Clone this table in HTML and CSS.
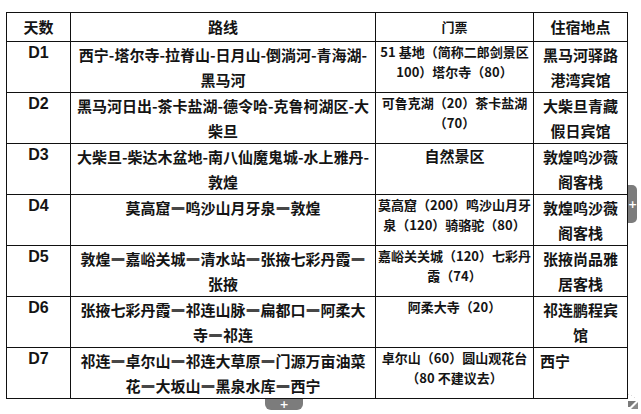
FILE: index.html
```html
<!DOCTYPE html>
<html lang="zh-CN">
<head>
<meta charset="utf-8">
<title>行程</title>
<link rel="stylesheet" href="styles.css">
</head>
<body>
<div class="stage">
  <table class="trip">
    <colgroup>
      <col class="c-day"><col class="c-route"><col class="c-ticket"><col class="c-stay">
    </colgroup>
    <thead>
      <tr class="head">
        <th class="h-big">天数</th>
        <th class="h-big">路线</th>
        <th class="h-small">门票</th>
        <th class="h-big">住宿地点</th>
      </tr>
    </thead>
    <tbody>
      <tr>
        <td class="day">D1</td>
        <td class="route">西宁-塔尔寺-拉脊山-日月山-倒淌河-青海湖-<br>黑马河</td>
        <td class="ticket">51 基地（简称二郎剑景区<br>100）塔尔寺（80）</td>
        <td class="stay">黑马河驿路<br>港湾宾馆</td>
      </tr>
      <tr>
        <td class="day">D2</td>
        <td class="route">黑马河日出-茶卡盐湖-德令哈-克鲁柯湖区-大<br>柴旦</td>
        <td class="ticket">可鲁克湖（20）茶卡盐湖<br>（70）</td>
        <td class="stay">大柴旦青藏<br>假日宾馆</td>
      </tr>
      <tr>
        <td class="day">D3</td>
        <td class="route">大柴旦-柴达木盆地-南八仙魔鬼城-水上雅丹-<br>敦煌</td>
        <td class="ticket big">自然景区</td>
        <td class="stay">敦煌鸣沙薇<br>阁客栈</td>
      </tr>
      <tr>
        <td class="day">D4</td>
        <td class="route">莫高窟<span class="dash">—</span>鸣沙山月牙泉<span class="dash">—</span>敦煌</td>
        <td class="ticket">莫高窟（200）鸣沙山月牙<br>泉（120）骑骆驼（80）</td>
        <td class="stay">敦煌鸣沙薇<br>阁客栈</td>
      </tr>
      <tr>
        <td class="day">D5</td>
        <td class="route">敦煌<span class="dash">—</span>嘉峪关城<span class="dash">—</span>清水站<span class="dash">—</span>张掖七彩丹霞<span class="dash">—</span><br>张掖</td>
        <td class="ticket">嘉峪关关城（120）七彩丹<br>霞（74）</td>
        <td class="stay">张掖尚品雅<br>居客栈</td>
      </tr>
      <tr>
        <td class="day">D6</td>
        <td class="route">张掖七彩丹霞<span class="dash">—</span>祁连山脉<span class="dash">—</span>扁都口<span class="dash">—</span>阿柔大<br>寺<span class="dash">—</span>祁连</td>
        <td class="ticket">阿柔大寺（20）</td>
        <td class="stay">祁连鹏程宾<br>馆</td>
      </tr>
      <tr>
        <td class="day">D7</td>
        <td class="route">祁连<span class="dash">—</span>卓尔山<span class="dash">—</span>祁连大草原<span class="dash">—</span>门源万亩油菜<br>花<span class="dash">—</span>大坂山<span class="dash">—</span>黑泉水库<span class="dash">—</span>西宁</td>
        <td class="ticket">卓尔山（60）圆山观花台<br>（80 不建议去）</td>
        <td class="stay left">西宁</td>
      </tr>
    </tbody>
  </table>

  <div class="tab-right"><span>+</span></div>
  <div class="tab-bottom"><span>+</span></div>
  <svg class="resize" width="14" height="16" viewBox="0 0 14 16">
    <rect x="1" y="0" width="1" height="1" fill="#ddd"/>
    <rect x="4" y="1" width="1" height="1" fill="#ddd"/>
    <rect x="7" y="3" width="1" height="1" fill="#ddd"/>
    <polygon points="1,7 9,7 3,13 1,13" fill="#7a7a7a"/>
    <polygon points="11,8 11,15 4,15" fill="#8a8a8a"/>
  </svg>
</div>
</body>
</html>
```

FILE: styles.css
```css
html, body {
  margin: 0;
  padding: 0;
  background: #ffffff;
}

.stage {
  position: relative;
  width: 641px;
  height: 414px;
  padding: 12px 0 0 6px;
  box-sizing: border-box;
  overflow: hidden;
  font-family: "Noto Sans CJK SC", "Noto Sans", sans-serif;
  color: #141414;
}

.trip {
  border-collapse: collapse;
  table-layout: fixed;
  width: 621px;
}

.c-day { width: 64px; }
.c-route { width: 305px; }
.c-ticket { width: 158px; }
.c-stay { width: 94px; }

.trip th,
.trip td {
  border: 1px solid #111;
  padding: 0;
  font-weight: 700;
  overflow: hidden;
}

.head { height: 29px; }
.trip tbody tr { height: 51px; }

.trip th {
  vertical-align: middle;
  text-align: center;
}

.h-big { font-size: 15px; line-height: 20px; }
.h-small { font-size: 13px; line-height: 18px; padding-bottom: 4px; }

.trip td {
  vertical-align: top;
  text-align: center;
}

.day {
  font-family: "Liberation Sans", Arial, sans-serif;
  font-size: 16px;
  line-height: 22px;
}

.route {
  font-size: 15px;
  line-height: 25px;
  padding: 0 4px;
  white-space: nowrap;
}

.dash {
  text-shadow: 0 1px 0 currentColor, 0 -1px 0 currentColor;
}

.ticket {
  font-size: 13px;
  line-height: 20px;
  padding-top: 1px;
  white-space: nowrap;
}

.ticket.big {
  font-size: 15px;
  line-height: 24px;
  padding-top: 0;
}

.stay {
  font-size: 15px;
  line-height: 25px;
  white-space: nowrap;
}

.stay.left {
  text-align: left;
  padding-left: 6px;
}

.tab-right {
  position: absolute;
  left: 628px;
  top: 185px;
  width: 9px;
  height: 38px;
  background: #7c7c7c;
  border-radius: 0 5px 5px 0;
  display: flex;
  align-items: center;
  justify-content: center;
}

.tab-bottom {
  position: absolute;
  left: 265px;
  top: 399px;
  width: 38px;
  height: 11px;
  background: #7c7c7c;
  border-radius: 0 0 6px 6px;
  display: flex;
  align-items: center;
  justify-content: center;
}

.tab-right span,
.tab-bottom span {
  color: #ffffff;
  font-family: "DejaVu Sans", sans-serif;
  font-weight: 700;
  font-size: 11px;
  line-height: 11px;
}

.resize {
  position: absolute;
  left: 627px;
  top: 394px;
}
```
